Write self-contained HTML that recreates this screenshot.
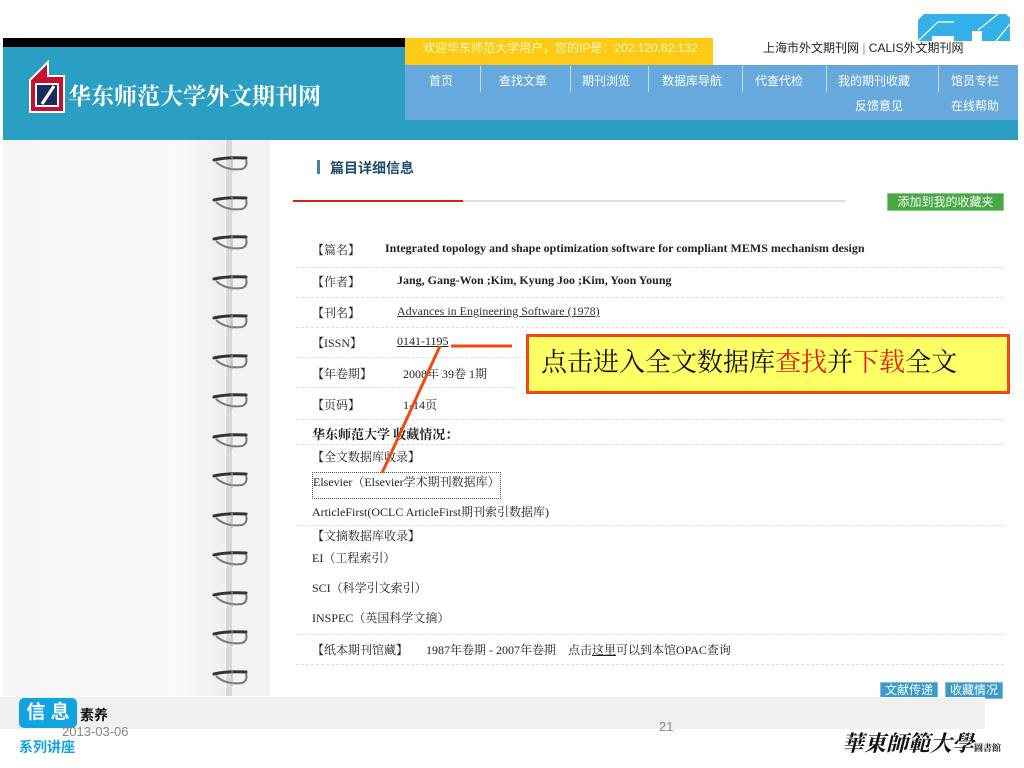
<!DOCTYPE html>
<html><head><meta charset="utf-8"><style>
*{margin:0;padding:0;box-sizing:border-box}
body{width:1024px;height:768px;position:relative;background:#fff;font-family:"Liberation Serif","Noto Serif CJK SC",serif;overflow:hidden}
.a{position:absolute}
.s{font-family:"Liberation Sans","Noto Sans CJK SC",sans-serif}
.nav{color:#fff;font-size:12px;font-family:"Liberation Sans","Noto Sans CJK SC",sans-serif}
.row{position:absolute;left:296px;width:708px;border-bottom:1px dashed #ddd;height:30px}
.t{font-size:12px;color:#222;position:absolute;white-space:nowrap}
.ring{position:absolute;left:212px;width:38px;height:18px}
.dv{position:absolute;top:66px;width:1px;height:26px;background:#cde}
</style></head><body>
<!-- header -->
<div class="a" style="left:3px;top:38px;width:410px;height:9px;background:#000"></div>
<div class="a" style="left:3px;top:47px;width:402px;height:93px;background:#2b9ec4"></div>
<div class="a" style="left:405px;top:120px;width:613px;height:20px;background:#2b9ec4"></div>
<div class="a" style="left:405px;top:38px;width:308px;height:27px;background:#fdcb16"></div>
<div class="a nav" style="left:423px;top:39px;color:#fff6c0">欢迎华东师范大学用户，您的IP是：202.120.82.132</div>
<div class="a" style="left:405px;top:65px;width:613px;height:55px;background:#68a9dd"></div>
<div class="a s" style="left:763px;top:39px;font-size:12px;color:#222">上海市外文期刊网 <span style="color:#999">|</span> CALIS外文期刊网</div>
<svg class="a" style="left:918px;top:14px" width="92" height="27"><path d="M6 0H88L92 4V27H0V6Z" fill="#35b0e8"/><path d="M0 27L20 8H36M60 16L80 0M78 27L92 10" stroke="#fff" stroke-width="1.2" fill="none"/><rect x="14" y="22" width="22" height="5" fill="#fff"/><rect x="54" y="17" width="10" height="10" fill="#fff"/></svg>
<div class="a nav" style="left:429px;top:72px">首页</div>
<div class="a nav" style="left:499px;top:72px">查找文章</div>
<div class="a nav" style="left:582px;top:72px">期刊浏览</div>
<div class="a nav" style="left:662px;top:72px">数据库导航</div>
<div class="a nav" style="left:755px;top:72px">代查代检</div>
<div class="a nav" style="left:838px;top:72px">我的期刊收藏</div>
<div class="a nav" style="left:951px;top:72px">馆员专栏</div>
<div class="a nav" style="left:855px;top:97px">反馈意见</div>
<div class="a nav" style="left:951px;top:97px">在线帮助</div>
<div class="dv" style="left:480px"></div>
<div class="dv" style="left:570px"></div>
<div class="dv" style="left:648px"></div>
<div class="dv" style="left:742px"></div>
<div class="dv" style="left:826px"></div>
<div class="dv" style="left:938px"></div>
<svg class="a" style="left:28px;top:60px" width="38" height="53"><path d="M2 20L20 2V16H36V52H2Z" fill="#c8102e" stroke="#fff" stroke-width="2"/><path d="M8 24H30V46H8Z" fill="#1b2c5a" stroke="#fff" stroke-width="2"/><path d="M14 44L26 26" stroke="#fff" stroke-width="3"/></svg>
<div class="a" style="left:68px;top:78px;font-size:23px;color:#fff;font-weight:bold;font-family:'Liberation Serif','Noto Serif CJK SC',serif">华东师范大学外文期刊网</div>
<!-- left paper -->
<div class="a" style="left:3px;top:140px;width:222px;height:556px;background:linear-gradient(90deg,#f6f6f6,#f9f9f9 80%,#eee)"></div>
<div class="a" style="left:226px;top:140px;width:6px;height:556px;background:#d9d9d9"></div>
<div class="a" style="left:232px;top:140px;width:38px;height:556px;background:#f3f3f3"></div>
<div id="rings"></div>
<!-- content -->
<div class="a" style="left:317px;top:160px;width:3px;height:14px;background:#4a7f9a"></div>
<div class="a s" style="left:330px;top:158px;font-size:14px;font-weight:bold;color:#1e4b6e">篇目详细信息</div>
<div class="a" style="left:293px;top:200px;width:170px;height:2px;background:#d62020"></div>
<div class="a" style="left:463px;top:200px;width:382px;height:2px;background:#ddd"></div>
<div class="a s" style="left:887px;top:193px;width:117px;height:18px;background:#46a946;border:1px solid #8c8;color:#fff;font-size:12px;text-align:center;line-height:16px">添加到我的收藏夹</div>
<div class="row" style="top:238px"></div>
<div class="t" style="left:312px;top:241px">【篇名】</div>
<div class="t" style="left:385px;top:241px;font-weight:bold">Integrated topology and shape optimization software for compliant MEMS mechanism design</div>
<div class="row" style="top:268px"></div>
<div class="t" style="left:312px;top:273px">【作者】</div>
<div class="t" style="left:397px;top:273px;font-weight:bold">Jang, Gang-Won ;Kim, Kyung Joo ;Kim, Yoon Young</div>
<div class="row" style="top:298px"></div>
<div class="t" style="left:312px;top:304px">【刊名】</div>
<div class="t" style="left:397px;top:304px;text-decoration:underline;color:#333">Advances in Engineering Software (1978)</div>
<div class="row" style="top:328px"></div>
<div class="t" style="left:312px;top:334px">【ISSN】</div>
<div class="t" style="left:397px;top:334px;text-decoration:underline">0141-1195</div>
<div class="row" style="top:358px;width:220px"></div>
<div class="t" style="left:312px;top:365px">【年卷期】</div>
<div class="t" style="left:403px;top:365px">2008年 39卷 1期</div>
<div class="row" style="top:390px"></div>
<div class="t" style="left:312px;top:396px">【页码】</div>
<div class="t" style="left:403px;top:396px">1-14页</div>
<div class="t" style="left:312px;top:424px;font-weight:bold;font-size:13px">华东师范大学 收藏情况：</div>
<div class="row" style="top:418px;height:27px"></div>
<div class="t" style="left:312px;top:448px">【全文数据库收录】</div>
<div class="t" style="left:312px;top:472px;border:1px dotted #555;padding:0 0 8px 0">Elsevier（Elsevier学术期刊数据库）</div>
<div class="t" style="left:312px;top:503px">ArticleFirst(OCLC ArticleFirst期刊索引数据库)</div>
<div class="row" style="top:496px;height:30px"></div>
<div class="t" style="left:312px;top:527px">【文摘数据库收录】</div>
<div class="t" style="left:312px;top:549px">EI（工程索引）</div>
<div class="t" style="left:312px;top:579px">SCI（科学引文索引）</div>
<div class="t" style="left:312px;top:609px">INSPEC（英国科学文摘）</div>
<div class="row" style="top:605px;height:30px"></div>
<div class="t" style="left:312px;top:641px">【纸本期刊馆藏】&nbsp;&nbsp;&nbsp;&nbsp;&nbsp;&nbsp;1987年卷期 - 2007年卷期&nbsp;&nbsp;&nbsp; 点击<u>这里</u>可以到本馆OPAC查询</div>
<div class="row" style="top:635px;height:30px"></div>
<div class="a s" style="left:880px;top:682px;width:58px;height:17px;background:#3a9bcf;border:1px solid #8bc;color:#fff;font-size:12px;text-align:center;line-height:15px">文献传递</div>
<div class="a s" style="left:945px;top:682px;width:58px;height:17px;background:#3a9bcf;border:1px solid #8bc;color:#fff;font-size:12px;text-align:center;line-height:15px">收藏情况</div>
<!-- callout -->
<svg class="a" style="left:0;top:0" width="1024" height="768"><path d="M451 346H512M440 346L382 473" stroke="#f04a10" stroke-width="3" fill="none"/></svg>
<div class="a" style="left:526px;top:334px;width:484px;height:60px;background:#ffff66;border:3px solid #f04a10;font-size:26px;line-height:52px;padding-left:12px;font-family:'Liberation Serif','Noto Serif CJK SC',serif;color:#111">点击进入全文数据库<span style="color:#e02010">查找</span>并<span style="color:#e02010">下载</span>全文</div>
<!-- footer -->
<div class="a" style="left:0;top:697px;width:985px;height:32px;background:#f0f0f0"></div>
<div class="a s" style="left:19px;top:698px;width:58px;height:30px;background:#13a3e0;border-radius:5px;color:#fff;font-size:19px;font-weight:bold;text-align:center;line-height:30px">信 息</div>
<div class="a s" style="left:80px;top:705px;font-size:14px;font-weight:bold;color:#111">素养</div>
<div class="a s" style="left:62px;top:724px;font-size:13px;color:#888">2013-03-06</div>
<div class="a s" style="left:19px;top:737px;font-size:14px;font-weight:bold;color:#13a3e0">系列讲座</div>
<div class="a s" style="left:659px;top:719px;font-size:13px;color:#888">21</div>
<div class="a" style="left:842px;top:727px;font-size:22px;font-weight:bold;font-style:italic;color:#111;font-family:'Noto Serif CJK TC',serif">華東師範大學<span style="font-size:9px;font-style:normal">圖書館</span></div>
<script>
var h='';for(var i=0;i<14;i++){var y=155+i*39.5;h+='<svg class="ring" style="top:'+y+'px" viewBox="0 0 38 18"><path d="M2 5Q14 2 34 3" stroke="#333" stroke-width="3" fill="none" stroke-linecap="round"/><path d="M4 7Q14 16 30 14Q36 12 34 4" stroke="#777" stroke-width="2" fill="none"/><path d="M20 2V17" stroke="#aaa" stroke-width="1"/></svg>';}
document.getElementById('rings').innerHTML=h;
</script>
</body></html>
